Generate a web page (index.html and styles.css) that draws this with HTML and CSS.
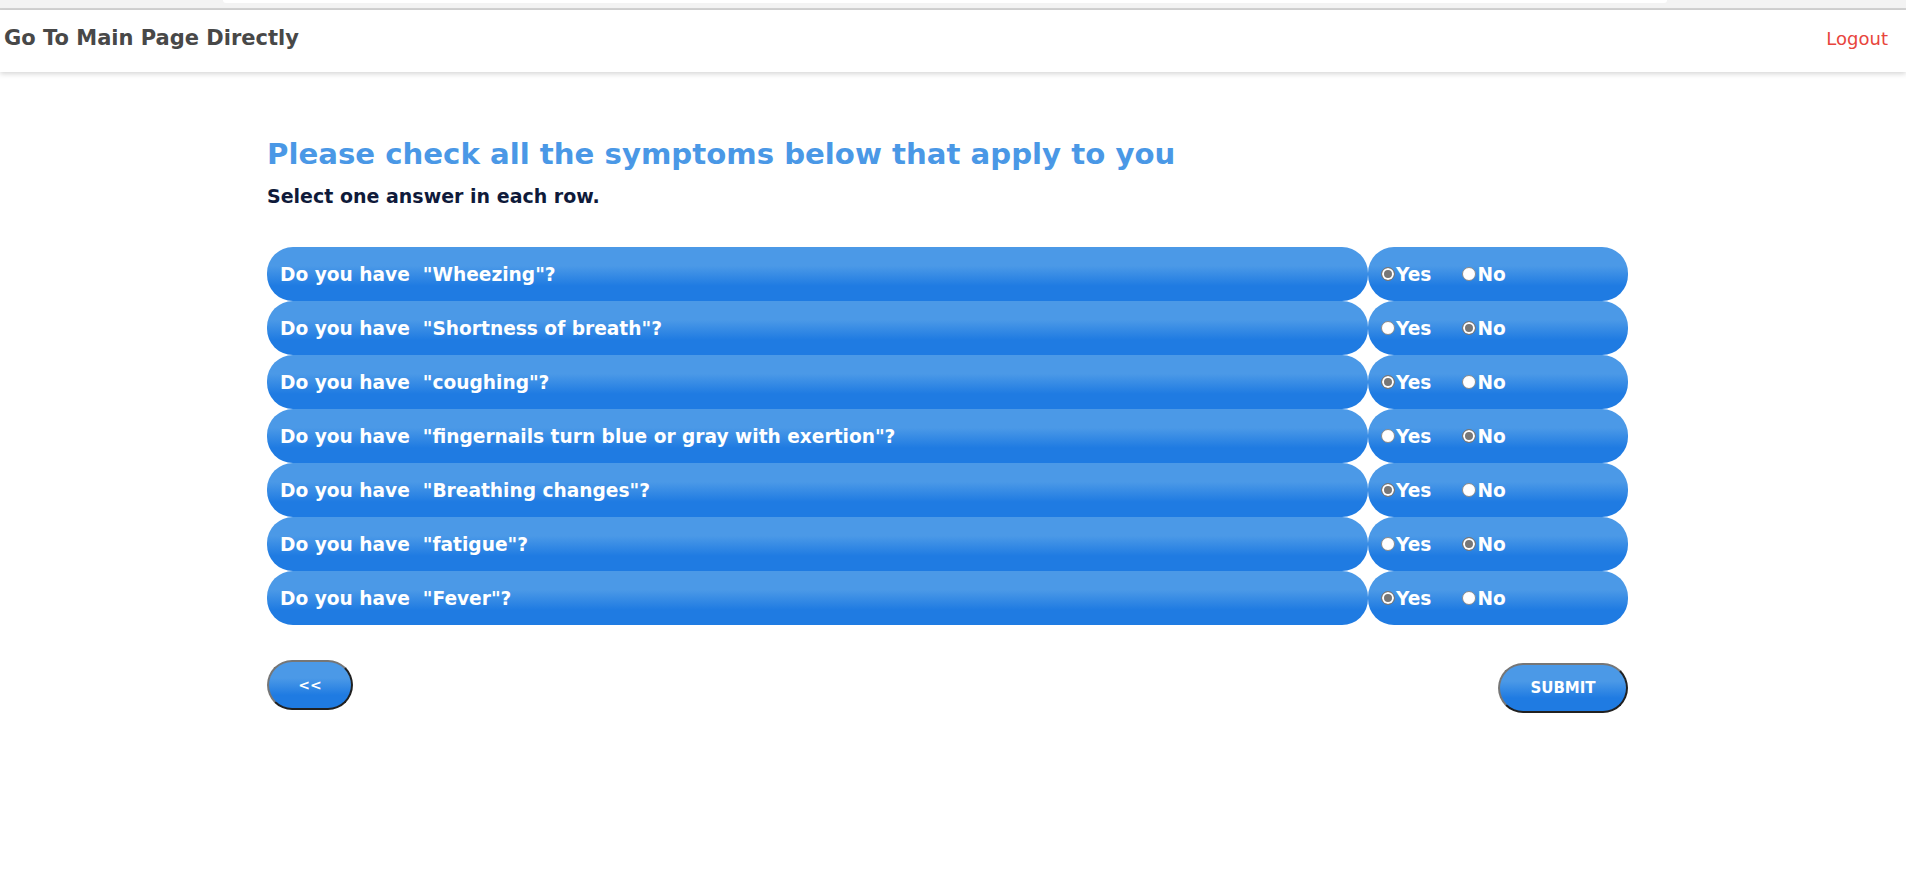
FILE: index.html
```html
<!DOCTYPE html>
<html lang="en">
<head>
<meta charset="utf-8">
<title>Symptoms</title>
<link rel="stylesheet" href="styles.css">
</head>
<body>
<div class="chrome"><div class="chrome-bar"></div></div>
<nav class="navbar">
  <a class="brand" href="#">Go To Main Page Directly</a>
  <a class="logout" href="#">Logout</a>
</nav>
<main class="main">
  <h1 class="title">Please check all the symptoms below that apply to you</h1>
  <p class="subtitle">Select one answer in each row.</p>
  <div class="rows">
    <div class="row"><div class="q">Do you have&nbsp;&nbsp;"Wheezing"?</div><div class="a"><label><input type="radio" name="r1" checked>Yes</label><label><input type="radio" name="r1">No</label></div></div>
    <div class="row"><div class="q">Do you have&nbsp;&nbsp;"Shortness of breath"?</div><div class="a"><label><input type="radio" name="r2">Yes</label><label><input type="radio" name="r2" checked>No</label></div></div>
    <div class="row"><div class="q">Do you have&nbsp;&nbsp;"coughing"?</div><div class="a"><label><input type="radio" name="r3" checked>Yes</label><label><input type="radio" name="r3">No</label></div></div>
    <div class="row"><div class="q">Do you have&nbsp;&nbsp;"fingernails turn blue or gray with exertion"?</div><div class="a"><label><input type="radio" name="r4">Yes</label><label><input type="radio" name="r4" checked>No</label></div></div>
    <div class="row"><div class="q">Do you have&nbsp;&nbsp;"Breathing changes"?</div><div class="a"><label><input type="radio" name="r5" checked>Yes</label><label><input type="radio" name="r5">No</label></div></div>
    <div class="row"><div class="q">Do you have&nbsp;&nbsp;"fatigue"?</div><div class="a"><label><input type="radio" name="r6">Yes</label><label><input type="radio" name="r6" checked>No</label></div></div>
    <div class="row"><div class="q">Do you have&nbsp;&nbsp;"Fever"?</div><div class="a"><label><input type="radio" name="r7" checked>Yes</label><label><input type="radio" name="r7">No</label></div></div>
  </div>
  <div class="actions">
    <button class="btn btn-back" type="button">&lt;&lt;</button>
    <button class="btn btn-submit" type="button">SUBMIT</button>
  </div>
</main>
</body>
</html>
```
FILE: styles.css
```css
html, body {
  margin: 0;
  padding: 0;
  background: #fff;
  font-family: "DejaVu Sans", "Liberation Sans", sans-serif;
}
.chrome {
  height: 8px;
  background: #f3f3f3;
  border-bottom: 2px solid #d3d3d3;
  padding-left: 223px;
  padding-right: 239px;
}
.chrome-bar {
  height: 3px;
  background: #fff;
  border-radius: 0 0 6px 6px;
}
.navbar {
  height: 62px;
  display: flex;
  align-items: center;
  justify-content: space-between;
  padding: 0 18px 0 4px;
  background: #fff;
  box-shadow: 0 2px 5px rgba(0, 0, 0, 0.16);
}
.brand {
  color: #484848;
  font-size: 21px;
  font-weight: 700;
  text-decoration: none;
  margin-top: -7px;
}
.logout {
  color: #e8453c;
  font-size: 18px;
  font-weight: 400;
  text-decoration: none;
  margin-top: -5px;
}
.main {
  width: 1361px;
  margin-left: 267px;
  padding-top: 62px;
}
.title {
  margin: 0;
  font-size: 29.2px;
  font-weight: 700;
  color: #4a98e6;
  line-height: 40px;
}
.subtitle {
  margin: 9px 0 0;
  font-size: 19px;
  font-weight: 700;
  color: #0f1a3a;
  line-height: 26px;
}
.rows {
  margin-top: 38px;
  display: flex;
  flex-direction: column;
}
.row {
  display: grid;
  grid-template-columns: 1101px 260px;
  height: 54px;
}
.q, .a {
  background: linear-gradient(to bottom, #4b99e7 0%, #4b99e7 35%, #1f7be2 72%, #1f7be2 100%);
  border-radius: 26px;
  color: #fff;
  font-weight: 700;
  font-size: 18.6px;
  display: flex;
  align-items: center;
}
.q {
  padding-left: 13px;
}
.a {
  padding-left: 13px;
  gap: 31px;
}
.a label {
  display: flex;
  align-items: center;
}
.a input {
  appearance: none;
  -webkit-appearance: none;
  width: 14px;
  height: 14px;
  margin: 0 1px 0 0;
  border-radius: 50%;
  border: 1px solid #8a8a8a;
  background: #fff;
}
.a input:checked {
  background: #777;
  box-shadow: inset 0 0 0 2px #fff;
  border-color: #777;
}
.actions {
  display: flex;
  justify-content: space-between;
  align-items: flex-start;
  margin-top: 35px;
}
.btn {
  background: linear-gradient(to bottom, #4b99e7 0%, #4b99e7 35%, #1f7be2 72%, #1f7be2 100%);
  color: #fff;
  font-family: "DejaVu Sans", "Liberation Sans", sans-serif;
  font-weight: 700;
  border: 2px outset #767676;
  border-radius: 25px;
  height: 50px;
}
.btn-back {
  width: 86px;
  font-size: 14px;
}
.btn-submit {
  width: 130px;
  font-size: 15px;
  margin-top: 3px;
}
```
